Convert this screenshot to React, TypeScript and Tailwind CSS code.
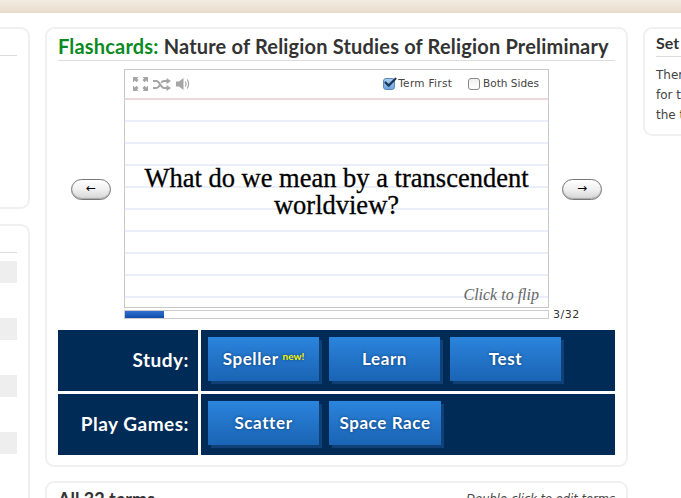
import React from 'react';

/* ++++++++++ ICONS ++++++++++ */
import { Check } from 'lucide-react';

const Panel: React.FC<{ className?: string; children?: React.ReactNode }> = ({ className = '', children }) => (
  <section className={`rounded-[9px] border-2 border-[#f0f0f0] bg-white ${className}`}>{children}</section>
);

const GameButton: React.FC<{ label: string; width?: string; badge?: boolean }> = ({ label, width = 'w-[111px]', badge }) => (
  <a className={`flex h-[44px] ${width} items-center justify-center bg-gradient-to-b from-[#2b84dc] to-[#1a64b4] text-[17px] font-bold tracking-[0.6px] text-white shadow-[3px_3px_0_#0f4178] [text-shadow:0_0_3px_#0b3a70]`}>
    {label}
    {badge && <sup className="relative -top-[3px] ml-[4px] text-[10px] font-bold tracking-normal text-[#f5f500]">new!</sup>}
  </a>
);

const ArrowButton: React.FC<{ glyph: string }> = ({ glyph }) => (
  <button className="mt-[2px] flex h-[21px] w-[40px] items-center justify-center rounded-[11px] border border-[#777] bg-gradient-to-b from-[#fff] via-[#f0f0f0] to-[#d5d5d5] pb-[3px] font-['DejaVu_Sans',sans-serif] text-[12px] leading-none text-black shadow-[inset_0_-1px_1px_#aaa]">
    {glyph}
  </button>
);

const ExpandIcon: React.FC = () => (
  <svg width="15" height="14" viewBox="0 0 15 14" fill="#a5a5a5">
    <path d="M0 0h5.5L4 1.5 5.6 3 3.4 5.2 1.8 3.6 0 5.4zM15 0H9.5L11 1.5 9.4 3l2.2 2.2 1.6-1.6L15 5.4zM0 14h5.5L4 12.5 5.6 11 3.4 8.8l-1.6 1.6L0 8.6zM15 14H9.5l1.5-1.5L9.4 11l2.2-2.2 1.6 1.6L15 8.6z" />
  </svg>
);

const ShuffleIcon: React.FC = () => (
  <svg width="18" height="13" viewBox="0 0 18 13" fill="none" stroke="#a5a5a5">
    <path d="M0 3h3.500c3 0 4.500 7 7.500 7h3M0 10h3.500c1.400 0 2.400-1.400 3.200-2.800M8.300 4.800C9 3.800 9.900 3 11 3h3" strokeWidth="2" />
    <path d="M13.500 0 18 3l-4.500 3zM13.500 7l4.500 3-4.500 3z" fill="#a5a5a5" stroke="none" />
  </svg>
);

const SpeakerIcon: React.FC = () => (
  <svg width="14" height="14" viewBox="0 0 14 14" fill="none" stroke="#a5a5a5">
    <path d="M0 4.500h3L7.500 1v12L3 9.500H0z" fill="#a5a5a5" stroke="none" />
    <path d="M9.300 4.500c.9 1.500.9 3.500 0 5M11.300 2.500c1.600 2.800 1.600 6.200 0 9" strokeWidth="1.200" />
  </svg>
);

const Row: React.FC<{ title: string; children: React.ReactNode }> = ({ title, children }) => (
  <div className="flex h-[61px] gap-[3px]">
    <div className="flex w-[140px] items-center justify-end bg-[#002b56] pr-[9px] text-[19px] font-bold tracking-[0.5px] text-white">{title}</div>
    <div className="flex flex-1 gap-[10px] bg-[#002b56] pl-[7px] pt-[7px]">{children}</div>
  </div>
);

const App: React.FC = () => {
  return (
    <div className="h-[498px] w-[681px] overflow-hidden bg-white font-['Lato',sans-serif]">
      <div className="h-[13px] bg-gradient-to-b from-[#f3ece2] to-[#e8dccb]" />

      <div className="mt-[14px] flex gap-[15px]">
        {/* left column, mostly off screen */}
        <div className="-ml-[170px] flex w-[200px] shrink-0 flex-col gap-[15px]">
          <Panel className="h-[182px]">
            <div className="mr-[11px] mt-[26px] border-b border-[#ddd]" />
          </Panel>
          <Panel className="h-[300px] pr-[11px] pt-[26px]">
            <div className="border-b border-[#ddd]" />
            <div className="mt-[8px] flex flex-col gap-[35px]">
              <div className="h-[22px] bg-[#eee]" />
              <div className="h-[22px] bg-[#eee]" />
              <div className="h-[22px] bg-[#eee]" />
              <div className="h-[22px] bg-[#eee]" />
            </div>
          </Panel>
        </div>

        {/* main column */}
        <div className="flex w-[583px] shrink-0 flex-col gap-[14px]">
          <Panel className="h-[440px] px-[11px]">
            <h1 className="h-[32px] border-b border-[#ddd] pt-[5px] text-[20px] font-bold leading-[24px] tracking-[0.18px] text-[#333] whitespace-nowrap">
              <span className="text-[#0a8a1f]">Flashcards:</span> Nature of Religion Studies of Religion Preliminary
            </h1>

            <div className="mt-[8px] flex items-center justify-between px-[13px]">
              <ArrowButton glyph="←" />
              <div className="flex h-[239px] w-[425px] flex-col border border-[#c8c8c8]">
                <div className="flex h-[30px] shrink-0 items-center justify-between border-b-2 border-[#ecd8da] pl-[8px] pr-[9px] font-['DejaVu_Sans',sans-serif] text-[10.5px] text-[#444]">
                  <div className="flex items-center gap-[5px]">
                    <ExpandIcon />
                    <ShuffleIcon />
                    <SpeakerIcon />
                  </div>
                  <div className="flex items-center gap-[16px]">
                    <label className="flex items-center gap-[3px] tracking-[0.3px]">
                      <span className="relative h-[12px] w-[12px] rounded-[3px] border border-[#5f86b4] bg-gradient-to-b from-[#a9cdf2] to-[#6da6e0]">
                        <Check size={15} strokeWidth={3.5} className="absolute -left-[1px] -top-[4px] text-[#1c3558]" />
                      </span>
                      Term First
                    </label>
                    <label className="flex items-center gap-[3px]">
                      <span className="h-[12px] w-[12px] rounded-[3px] border border-[#888] bg-gradient-to-b from-[#f0f0f0] to-[#fff]" />
                      Both Sides
                    </label>
                  </div>
                </div>
                <div className="relative flex flex-1 items-center justify-center bg-[repeating-linear-gradient(to_bottom,#fff_0,#fff_20px,#e9eef8_20px,#e9eef8_22px)] px-[15px] pb-[23px] text-center font-['Liberation_Serif',serif] text-[26.5px] leading-[27px] text-black [-webkit-text-stroke:0.3px_#000]">
                  What do we mean by a transcendent worldview?
                  <span className="absolute bottom-[2px] right-[9px] text-[16px] italic leading-[20px] text-[#666] [-webkit-text-stroke:0]">Click to flip</span>
                </div>
              </div>
              <ArrowButton glyph="→" />
            </div>

            <div className="relative ml-[66px] mt-[2px] h-[9px] w-[425px] border border-[#ccc]">
              <div className="h-full w-[39px] bg-gradient-to-b from-[#2f6fd0] to-[#0f4eaa]" />
              <span className="absolute left-[428px] -top-[3px] font-['DejaVu_Sans',sans-serif] text-[11px] leading-[14px] tracking-[0.5px] text-[#333]">3/32</span>
            </div>

            <div className="mt-[11px] flex flex-col gap-[3px]">
              <Row title="Study:">
                <GameButton label="Speller" badge />
                <GameButton label="Learn" />
                <GameButton label="Test" />
              </Row>
              <Row title="Play Games:">
                <GameButton label="Scatter" />
                <GameButton label="Space Race" width="w-[112px]" />
              </Row>
            </div>
          </Panel>

          <Panel className="h-[100px] px-[11px]">
            <div className="mt-[3px] flex items-start justify-between">
              <span className="text-[18px] font-bold text-[#333]">All 32 terms</span>
              <span className="mt-[6px] font-['DejaVu_Sans',sans-serif] text-[11.500px] italic leading-[14px] text-[#444]">Double-click to edit terms</span>
            </div>
          </Panel>
        </div>

        {/* right column, cut off by the window */}
        <div className="w-[200px] shrink-0">
          <Panel className="h-[109px] pl-[11px]">
            <div className="h-[28px] border-b border-[#ddd] pt-[5px] text-[16px] font-bold leading-[18px] text-[#333]">Set Info</div>
            <p className="mt-[8px] font-['DejaVu_Sans',sans-serif] text-[12px] leading-[20px] text-[#444]">
              There are<br />for this set<br />the terms
            </p>
          </Panel>
        </div>
      </div>
    </div>
  );
};

export default App;
